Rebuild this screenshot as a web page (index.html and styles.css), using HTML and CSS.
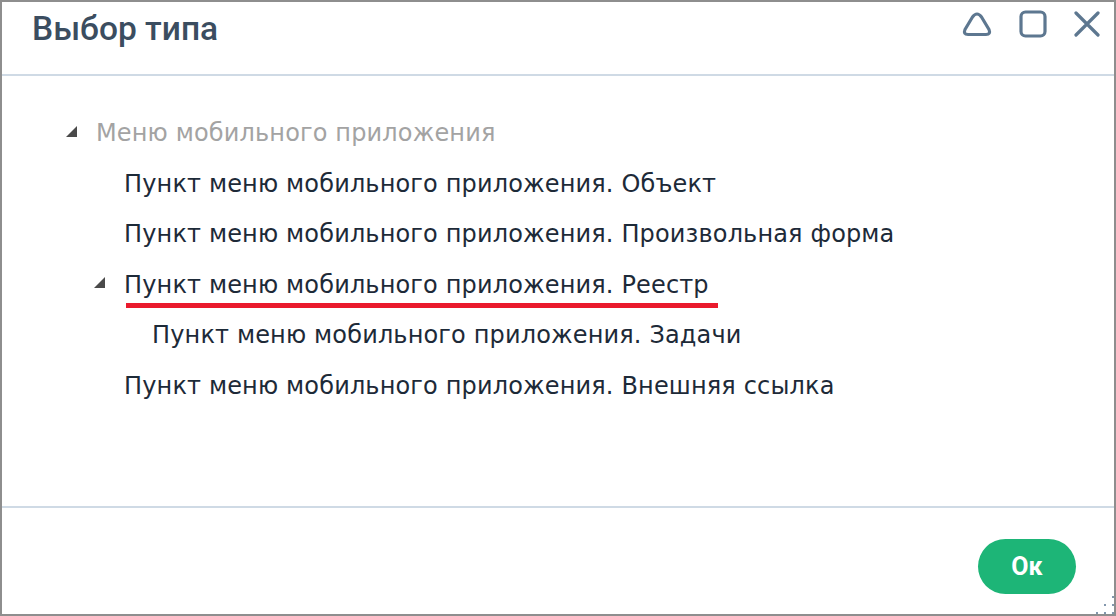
FILE: index.html
```html
<!DOCTYPE html>
<html lang="ru">
<head>
<meta charset="utf-8">
<title>Выбор типа</title>
<link rel="stylesheet" href="styles.css">
</head>
<body>
<div class="dialog">
  <div class="header">
    <div class="title">Выбор типа</div>
    <div class="tools">
      <svg class="tool" width="30" height="28" viewBox="0 0 30 28"><path d="M6 24.5 H24 Q29 24.5 27 19.5 L19.5 7 Q15 1 10.5 7 L3 19.5 Q1 24.5 6 24.5 Z" fill="none" stroke="#5d7790" stroke-width="3.2" stroke-linejoin="round"/></svg>
      <svg class="tool" width="28" height="28" viewBox="0 0 28 28"><rect x="2" y="2" width="24" height="24" rx="4.5" fill="none" stroke="#5d7790" stroke-width="3.2"/></svg>
      <svg class="tool" width="26" height="26" viewBox="0 0 26 26"><path d="M2 2 L24 24 M24 2 L2 24" fill="none" stroke="#5d7790" stroke-width="3.2" stroke-linecap="round"/></svg>
    </div>
  </div>
  <div class="body">
    <div class="row lvl0 muted"><span class="tri"></span><span class="label">Меню мобильного приложения</span></div>
    <div class="row lvl1"><span class="label">Пункт меню мобильного приложения. Объект</span></div>
    <div class="row lvl1"><span class="label">Пункт меню мобильного приложения. Произвольная форма</span></div>
    <div class="row lvl1"><span class="tri"></span><span class="label marked">Пункт меню мобильного приложения. Реестр</span></div>
    <div class="row lvl2"><span class="label">Пункт меню мобильного приложения. Задачи</span></div>
    <div class="row lvl1"><span class="label">Пункт меню мобильного приложения. Внешняя ссылка</span></div>
  </div>
  <div class="footer">
    <button class="ok">Ок</button>
    <div class="grip">
      <i class="d1"></i><i class="d2"></i><i class="d3"></i><i class="d4"></i><i class="d5"></i><i class="d6"></i>
    </div>
  </div>
</div>
</body>
</html>
```

FILE: styles.css
```css
* { box-sizing: border-box; }
html, body { margin: 0; padding: 0; background: #ffffff; }
body { width: 1116px; height: 616px; overflow: hidden; }

.dialog {
  width: 1116px;
  height: 616px;
  border: 2px solid #8e8e8e;
  background: #ffffff;
  display: flex;
  flex-direction: column;
  position: relative;
}

.header {
  height: 74px;
  flex: 0 0 74px;
  border-bottom: 2px solid #cfdae5;
  display: flex;
  align-items: flex-start;
  justify-content: space-between;
  padding: 0 14px 0 30px;
}
.title {
  font-family: Roboto, "Liberation Sans", sans-serif;
  font-weight: 500;
  font-size: 33.5px;
  color: #3b4d60;
  line-height: 1;
  margin-top: 10px;
}
.tools {
  display: flex;
  align-items: center;
  gap: 27px;
  margin-top: 8px;
}
.tool { display: block; }

.body {
  flex: 1 1 auto;
  padding-top: 32px;
  font-family: "DejaVu Sans", Verdana, sans-serif;
  font-size: 24px;
  letter-spacing: 0.15px;
  color: #1d2a38;
  border-bottom: 2px solid #cfdae5;
}
.row {
  height: 50.5px;
  display: flex;
  align-items: center;
  position: relative;
}
.lvl0 { padding-left: 94px; }
.lvl1 { padding-left: 122px; }
.lvl2 { padding-left: 150px; }
.muted { color: #a3a3a3; }
.tri {
  position: absolute;
  width: 0; height: 0;
  border-left: 11px solid transparent;
  border-bottom: 11px solid #4a4a4a;
  margin-top: -4px;
}
.lvl0 .tri { left: 64px; }
.lvl1 .tri { left: 92px; }
.label { white-space: nowrap; position: relative; }
.marked::after {
  content: "";
  position: absolute;
  left: 2px;
  width: 592px;
  top: 100%;
  margin-top: 4px;
  height: 5px;
  background: #ea1a2d;
}

.footer {
  flex: 0 0 106px;
  height: 106px;
  display: flex;
  justify-content: flex-end;
  align-items: flex-start;
  padding: 31px 38px 0 0;
  position: relative;
}
.ok {
  width: 98px;
  height: 55px;
  border: none;
  border-radius: 28px;
  background: #1db577;
  color: #ffffff;
  font-family: Roboto, "Liberation Sans", sans-serif;
  font-weight: 700;
  font-size: 25px;
  padding: 0;
}
.grip { position: absolute; right: 0; bottom: 0; width: 20px; height: 20px; }
.grip i { position: absolute; width: 2px; height: 2px; background: #8297ad; }
.grip .d1 { right: 0; bottom: 16px; }
.grip .d2 { right: 8px; bottom: 8px; }
.grip .d3 { right: 0; bottom: 8px; }
.grip .d4 { right: 16px; bottom: 0; }
.grip .d5 { right: 8px; bottom: 0; }
.grip .d6 { right: 0; bottom: 0; }
```
